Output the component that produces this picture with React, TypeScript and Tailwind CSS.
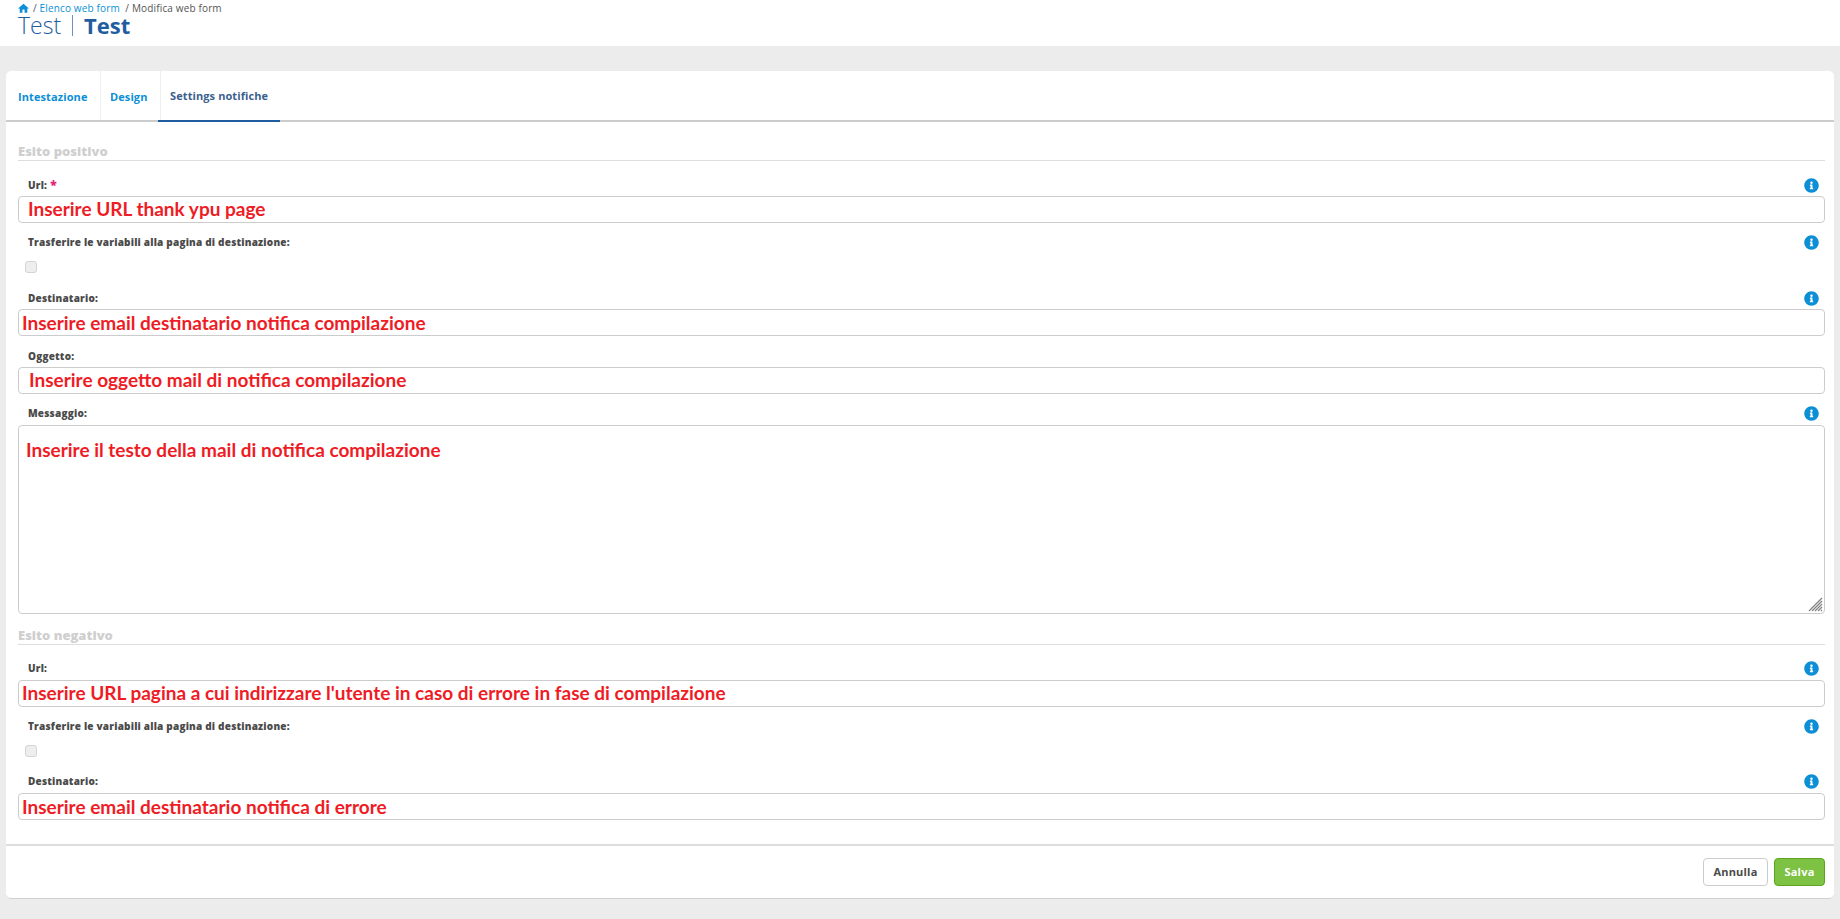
import { FaInfoCircle } from "react-icons/fa"
import { MdHome } from "react-icons/md"

function Info() {
  return <FaInfoCircle className="text-[15px] text-[#0c8fd6] shrink-0" />
}

function Label({ text, required, info = true }: { text: string; required?: boolean; info?: boolean }) {
  return (
    <div className="flex items-center justify-between h-[20px] pl-[10px] pr-[6px]">
      <span className="font-['Open_Sans'] text-[10px] font-extrabold text-[#4a4a4a] tracking-[0.2px]">
        {text}
        {required && <span className="text-[#e6207a] text-[12px] ml-[3px]">*</span>}
      </span>
      {info && <Info />}
    </div>
  )
}

function Input({ note, pad }: { note: string; pad: string }) {
  return (
    <div className={`h-[27px] border border-[#cccccc] rounded-[4px] bg-white flex items-center ${pad}`}>
      <span className="font-['Lato'] text-[19px] font-bold text-[#ee1c25] leading-none whitespace-nowrap">{note}</span>
    </div>
  )
}

function Check() {
  return <div className="ml-[7px] w-[12px] h-[12px] rounded-[3px] border border-[#d4d4d4] bg-[#eeeeee]" />
}

function Section({ text }: { text: string }) {
  return (
    <div className="h-[21px] border-b border-[#dddddd] flex items-end">
      <span className="font-['Open_Sans'] text-[13px] font-extrabold text-[#cfcfcf] leading-[17px]">{text}</span>
    </div>
  )
}

export default function App() {
  return (
    <div className="min-h-[919px] bg-[#ececec] font-['Open_Sans',sans-serif]">
      {/* Header */}
      <div className="h-[46px] bg-white pl-[18px] overflow-hidden">
        <div className="flex items-center h-[16px] text-[10px] leading-none tracking-[0.15px] text-[#555555] whitespace-pre">
          <MdHome className="text-[13px] text-[#0c8fd6] -ml-[1px] mr-[3px]" />
          <span>/ </span>
          <span className="text-[#0c8fd6]">Elenco web form</span>
          <span>  / Modifica web form</span>
        </div>
        <div className="flex items-center h-[20px] -mt-[1px] text-[23px] leading-none text-[#1f5da0]">
          <span className="font-light">Test</span>
          <span className="w-px h-[21px] bg-[#6f8fbd] ml-[11px] mr-[11px]" />
          <span className="font-bold text-[22px]">Test</span>
        </div>
      </div>

      {/* Card */}
      <div className="mt-[25px] ml-[6px] mr-[6px] h-[828px] bg-white rounded-[5px] border-b border-[#d0d0d0] flex flex-col">
        <div className="h-[51px] border-b-2 border-[#cccccc] flex text-[11px] font-bold tracking-[0.1px]">
          <div className="w-[95px] h-[49px] pl-[12px] pt-[3px] flex items-center border-r border-[#eeeeee] text-[#0c8fd6]">Intestazione</div>
          <div className="w-[60px] h-[49px] pl-[9px] pt-[3px] flex items-center border-r border-[#eeeeee] text-[#0c8fd6]">Design</div>
          <div className="w-[122px] h-[51px] -ml-[3px] pl-[12px] pt-[1px] flex items-center border-b-2 border-[#1f5da0] text-[#3a5f8f]">Settings notifiche</div>
        </div>

        <div className="flex-1 pl-[12px] pr-[9px] pt-[18px]">
          <Section text="Esito positivo" />
          <div className="mt-[14px]"><Label text="Url:" required /></div>
          <div className="mt-[1px]"><Input note="Inserire URL thank ypu page" pad="pl-[9px] pb-[2px]" /></div>
          <div className="mt-[9px]"><Label text="Trasferire le variabili alla pagina di destinazione:" /></div>
          <div className="mt-[9px]"><Check /></div>
          <div className="mt-[15px]"><Label text="Destinatario:" /></div>
          <div className="mt-[1px]"><Input note="Inserire email destinatario notifica compilazione" pad="pl-[3px]" /></div>
          <div className="mt-[10px]"><Label text="Oggetto:" info={false} /></div>
          <div className="mt-[1px]"><Input note="Inserire oggetto mail di notifica compilazione" pad="pl-[10px] pb-[2px]" /></div>
          <div className="mt-[9px]"><Label text="Messaggio:" /></div>
          <div className="mt-[2px] relative h-[189px] border border-[#cccccc] rounded-[4px] pl-[7px] pt-[13px]">
            <span className="font-['Lato'] text-[19px] font-bold text-[#ee1c25] leading-none whitespace-nowrap">Inserire il testo della mail di notifica compilazione</span>
            <svg className="absolute right-[1px] bottom-[1px]" width="15" height="15" viewBox="0 0 15 15" stroke="#808080" strokeWidth="1.2">
              <path d="M1 14 14 1M4 14 14 4M7 14l7-7M10 14l4-4M13 14l1-1" />
            </svg>
          </div>

          <div className="mt-[10px]"><Section text="Esito negativo" /></div>
          <div className="mt-[13px]"><Label text="Url:" /></div>
          <div className="mt-[2px]"><Input note="Inserire URL pagina a cui indirizzare l'utente in caso di errore in fase di compilazione" pad="pl-[3px] pb-[2px]" /></div>
          <div className="mt-[9px]"><Label text="Trasferire le variabili alla pagina di destinazione:" /></div>
          <div className="mt-[9px]"><Check /></div>
          <div className="mt-[14px]"><Label text="Destinatario:" /></div>
          <div className="mt-[2px]"><Input note="Inserire email destinatario notifica di errore" pad="pl-[3px] pb-[1px]" /></div>
        </div>

        <div className="h-[54px] border-t-2 border-[#dddddd] flex items-start justify-end gap-[6px] pt-[12px] pr-[9px] text-[11px] font-bold tracking-[0.2px]">
          <div className="w-[65px] h-[28px] flex items-center justify-center border border-[#cccccc] rounded-[4px] text-[#4a4a4a]">Annulla</div>
          <div className="w-[51px] h-[28px] flex items-center justify-center border border-[#5da422] rounded-[4px] bg-[#7dc242] text-white">Salva</div>
        </div>
      </div>
    </div>
  )
}
